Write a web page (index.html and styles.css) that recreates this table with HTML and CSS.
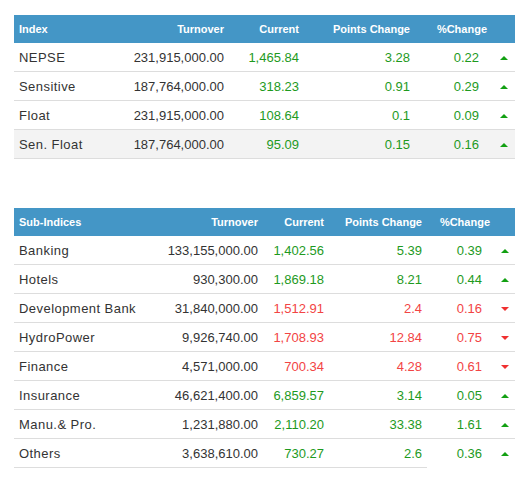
FILE: index.html
```html
<!DOCTYPE html>
<html lang="en">
<head>
    <meta charset="UTF-8">
    <meta name="viewport" content="width=device-width, initial-scale=1.0">
    <title>Market Summary</title>
    <link rel="stylesheet" href="styles.css">
</head>
<body>
    <main class="resumen">
        <table class="tabla tabla-indices">
            <colgroup>
                <col class="c-nombre"><col class="c-turnover"><col class="c-current">
                <col class="c-points"><col class="c-pct"><col class="c-flecha">
            </colgroup>
            <thead>
                <tr>
                    <th class="izq">Index</th>
                    <th>Turnover</th>
                    <th>Current</th>
                    <th>Points Change</th>
                    <th>%Change</th>
                    <th></th>
                </tr>
            </thead>
            <tbody>
                <tr>
                    <td class="izq nombre">NEPSE</td>
                    <td>231,915,000.00</td>
                    <td class="sube">1,465.84</td>
                    <td class="sube">3.28</td>
                    <td class="sube pct">0.22</td>
                    <td class="flecha"><span class="arriba"></span></td>
                </tr>
                <tr>
                    <td class="izq nombre">Sensitive</td>
                    <td>187,764,000.00</td>
                    <td class="sube">318.23</td>
                    <td class="sube">0.91</td>
                    <td class="sube pct">0.29</td>
                    <td class="flecha"><span class="arriba"></span></td>
                </tr>
                <tr>
                    <td class="izq nombre">Float</td>
                    <td>231,915,000.00</td>
                    <td class="sube">108.64</td>
                    <td class="sube">0.1</td>
                    <td class="sube pct">0.09</td>
                    <td class="flecha"><span class="arriba"></span></td>
                </tr>
                <tr class="marcada">
                    <td class="izq nombre">Sen. Float</td>
                    <td>187,764,000.00</td>
                    <td class="sube">95.09</td>
                    <td class="sube">0.15</td>
                    <td class="sube pct">0.16</td>
                    <td class="flecha"><span class="arriba"></span></td>
                </tr>
            </tbody>
        </table>

        <table class="tabla tabla-sub">
            <colgroup>
                <col class="c-nombre"><col class="c-turnover"><col class="c-current">
                <col class="c-points"><col class="c-pct"><col class="c-flecha">
            </colgroup>
            <thead>
                <tr>
                    <th class="izq">Sub-Indices</th>
                    <th>Turnover</th>
                    <th>Current</th>
                    <th>Points Change</th>
                    <th>%Change</th>
                    <th></th>
                </tr>
            </thead>
            <tbody>
                <tr>
                    <td class="izq nombre">Banking</td>
                    <td>133,155,000.00</td>
                    <td class="sube">1,402.56</td>
                    <td class="sube">5.39</td>
                    <td class="sube pct">0.39</td>
                    <td class="flecha"><span class="arriba"></span></td>
                </tr>
                <tr>
                    <td class="izq nombre">Hotels</td>
                    <td>930,300.00</td>
                    <td class="sube">1,869.18</td>
                    <td class="sube">8.21</td>
                    <td class="sube pct">0.44</td>
                    <td class="flecha"><span class="arriba"></span></td>
                </tr>
                <tr>
                    <td class="izq nombre">Development Bank</td>
                    <td>31,840,000.00</td>
                    <td class="baja">1,512.91</td>
                    <td class="baja">2.4</td>
                    <td class="baja pct">0.16</td>
                    <td class="flecha"><span class="abajo"></span></td>
                </tr>
                <tr>
                    <td class="izq nombre">HydroPower</td>
                    <td>9,926,740.00</td>
                    <td class="baja">1,708.93</td>
                    <td class="baja">12.84</td>
                    <td class="baja pct">0.75</td>
                    <td class="flecha"><span class="abajo"></span></td>
                </tr>
                <tr>
                    <td class="izq nombre">Finance</td>
                    <td>4,571,000.00</td>
                    <td class="baja">700.34</td>
                    <td class="baja">4.28</td>
                    <td class="baja pct">0.61</td>
                    <td class="flecha"><span class="abajo"></span></td>
                </tr>
                <tr>
                    <td class="izq nombre">Insurance</td>
                    <td>46,621,400.00</td>
                    <td class="sube">6,859.57</td>
                    <td class="sube">3.14</td>
                    <td class="sube pct">0.05</td>
                    <td class="flecha"><span class="arriba"></span></td>
                </tr>
                <tr>
                    <td class="izq nombre">Manu.&amp; Pro.</td>
                    <td>1,231,880.00</td>
                    <td class="sube">2,110.20</td>
                    <td class="sube">33.38</td>
                    <td class="sube pct">1.61</td>
                    <td class="flecha"><span class="arriba"></span></td>
                </tr>
                <tr>
                    <td class="izq nombre">Others</td>
                    <td>3,638,610.00</td>
                    <td class="sube">730.27</td>
                    <td class="sube">2.6</td>
                    <td class="sube pct sin-borde">0.36</td>
                    <td class="flecha sin-borde"><span class="arriba"></span></td>
                </tr>
            </tbody>
        </table>
    </main>
</body>
</html>
```

FILE: styles.css
```css
body {
    margin: 0;
    background: #fff;
    font-family: "Liberation Sans", Arial, sans-serif;
    color: #333;
}

.resumen {
    padding: 15px 9px 0 14px;
    display: flex;
    flex-direction: column;
    gap: 49px;
}

.tabla {
    width: 501px;
    border-collapse: collapse;
    table-layout: fixed;
}

.tabla th {
    height: 28px;
    padding: 0 5px;
    background: #4496c6;
    color: #fff;
    font-size: 11px;
    font-weight: bold;
    text-align: right;
    white-space: nowrap;
}

.tabla td {
    height: 28px;
    padding: 0 5px;
    font-size: 13px;
    text-align: right;
    border-bottom: 1px solid #ddd;
    white-space: nowrap;
}

.tabla .izq {
    text-align: left;
}

.nombre {
    letter-spacing: 0.45px;
}

.tabla td.pct {
    padding-right: 13px;
}

.tabla td.sin-borde {
    border-bottom: none;
}

.marcada td {
    background: #f3f3f3;
}

.sube { color: #1e9a1e; }
.baja { color: #f24444; }

.tabla td.flecha {
    padding: 0;
    text-align: center;
}

.arriba, .abajo {
    display: inline-block;
    width: 0;
    height: 0;
    border-left: 4px solid transparent;
    border-right: 4px solid transparent;
    vertical-align: middle;
}

.arriba {
    border-bottom: 4px solid #12a012;
}

.abajo {
    border-top: 4px solid #f03030;
}

/* anchos de columna */
.tabla-indices .c-nombre { width: 105px; }
.tabla-indices .c-turnover { width: 110px; }
.tabla-indices .c-current { width: 75px; }
.tabla-indices .c-points { width: 111px; }
.tabla-indices .c-pct { width: 77px; }
.tabla-indices .c-flecha { width: 23px; }

.tabla-sub .c-nombre { width: 136px; }
.tabla-sub .c-turnover { width: 113px; }
.tabla-sub .c-current { width: 66px; }
.tabla-sub .c-points { width: 98px; }
.tabla-sub .c-pct { width: 68px; }
.tabla-sub .c-flecha { width: 20px; }
```
